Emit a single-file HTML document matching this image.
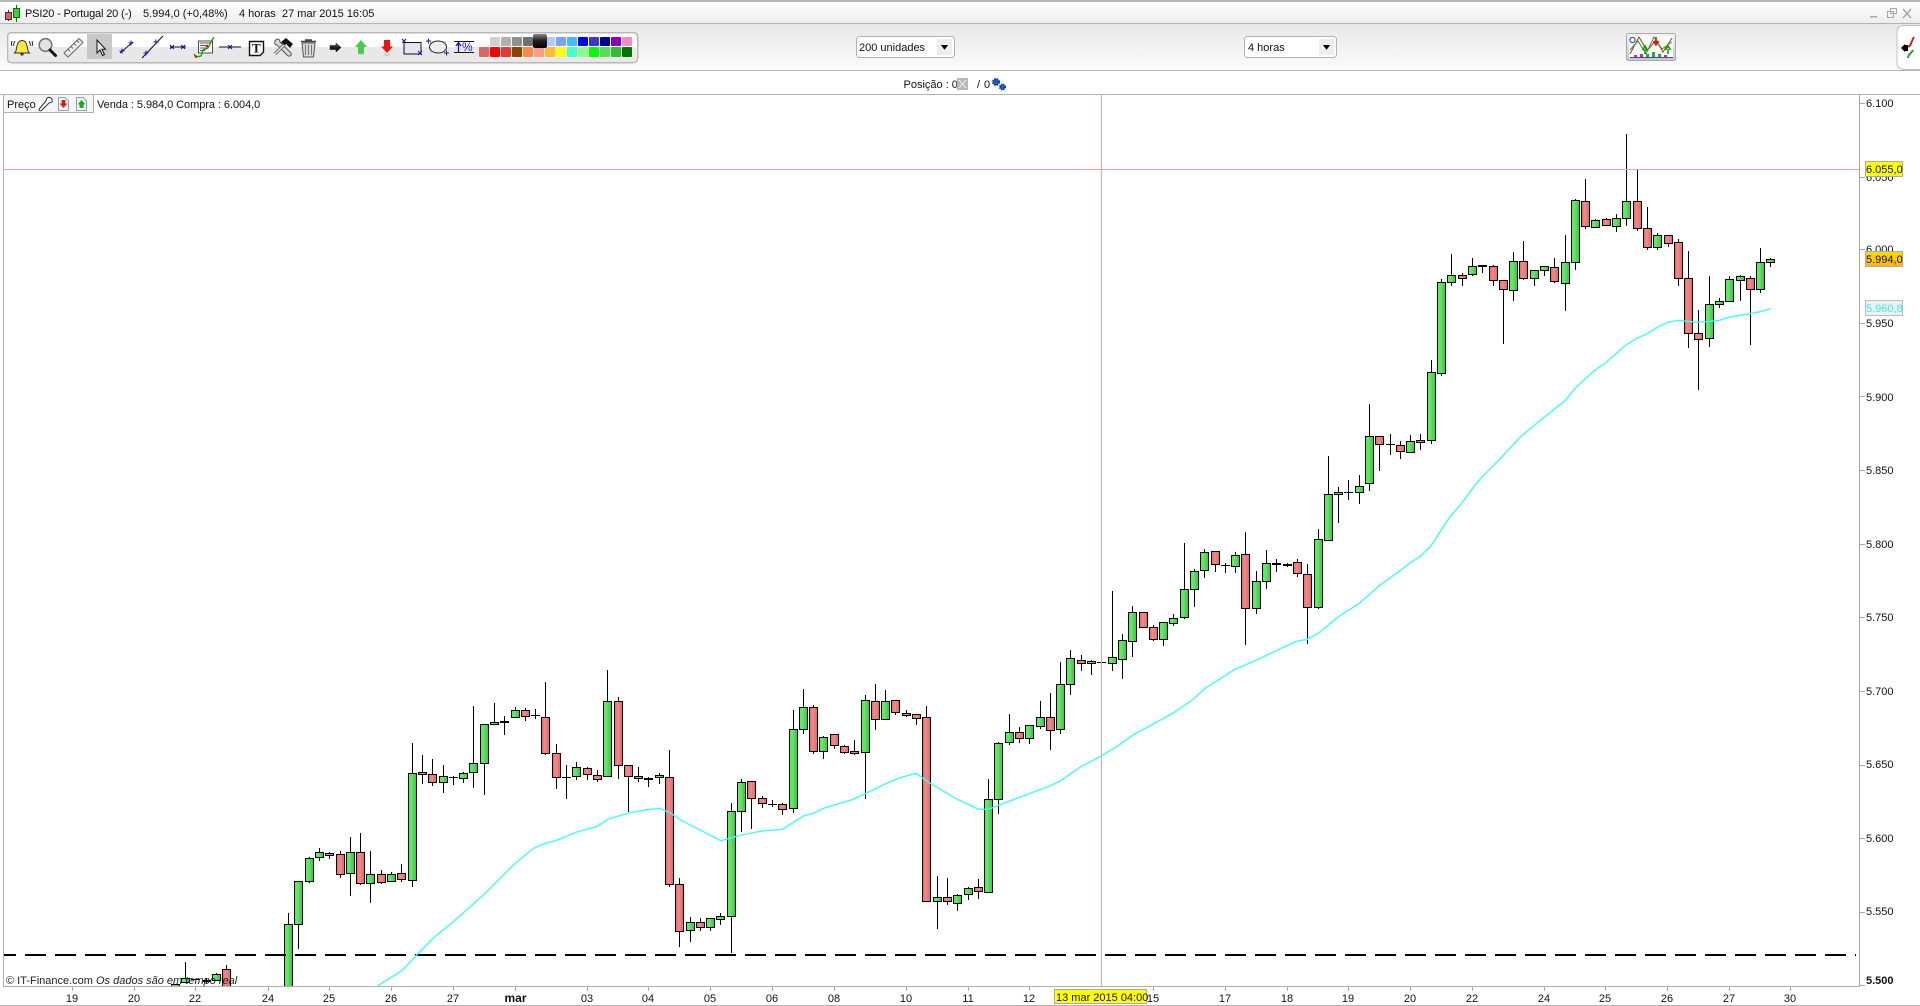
<!DOCTYPE html>
<html><head><meta charset="utf-8"><title>PSI20</title>
<style>
html,body{margin:0;padding:0;background:#fff;width:1920px;height:1006px;overflow:hidden}
svg{display:block;position:absolute;left:0;top:0}
text{font-family:"Liberation Sans",sans-serif;font-size:11px;fill:#111}
.b rect{width:8px;stroke:#000;stroke-width:1}
.sw rect{width:10px;rx:1.5px}
.xl text{text-anchor:middle;font-size:11px}
.yl text{font-size:11px}
.bl{fill:none;stroke:#1010e0;stroke-width:1}
</style></head><body>
<svg width="1920" height="1006" viewBox="0 0 1920 1006" xmlns="http://www.w3.org/2000/svg" shape-rendering="crispEdges">
<defs>
<linearGradient id="tb" x1="0" y1="0" x2="0" y2="1"><stop offset="0" stop-color="#fff"/><stop offset="1" stop-color="#ededed"/></linearGradient>
<linearGradient id="tl" x1="0" y1="0" x2="0" y2="1"><stop offset="0" stop-color="#e8e8e8"/><stop offset="1" stop-color="#fbfbfb"/></linearGradient>
<linearGradient id="g"><stop offset="0" stop-color="#5ee85e"/><stop offset=".35" stop-color="#62ea62"/><stop offset="1" stop-color="#3cc04c"/></linearGradient>
<linearGradient id="r"><stop offset="0" stop-color="#dc6a6a"/><stop offset=".4" stop-color="#f88888"/><stop offset="1" stop-color="#dc6868"/></linearGradient>
<linearGradient id="au" x1="0" y1="0" x2="0" y2="1"><stop offset="0" stop-color="#ffdd00"/><stop offset="1" stop-color="#ffb800"/></linearGradient>
<linearGradient id="blk" x1="0" y1="0" x2="0" y2="1"><stop offset="0" stop-color="#888"/><stop offset=".45" stop-color="#222"/><stop offset="1" stop-color="#000"/></linearGradient>
<linearGradient id="btn" x1="0" y1="0" x2="0" y2="1"><stop offset="0" stop-color="#f4f4f4"/><stop offset="1" stop-color="#c8c8c8"/></linearGradient>
<clipPath id="plot"><rect x="4" y="95" width="1855" height="891"/></clipPath>
</defs>

<!-- window chrome -->
<rect x="0" y="0" width="1920" height="1006" fill="#fff"/>
<rect x="0" y="0" width="1920" height="2" fill="#b8b8b8"/>
<rect x="0" y="2" width="1920" height="21" fill="url(#tb)"/>
<rect x="0" y="23" width="1920" height="1" fill="#b4b4b4"/>
<rect x="0" y="24" width="1920" height="46" fill="url(#tl)"/>
<rect x="0" y="70" width="1920" height="1" fill="#b4b4b4"/>
<rect x="0" y="94" width="1920" height="1" fill="#b4b4b4"/>
<rect x="3" y="94" width="1" height="892" fill="#b0b0b0"/>
<rect x="1859" y="94" width="1" height="892" fill="#a8a8a8"/>
<rect x="3" y="986" width="1857" height="1" fill="#b0b0b0"/>
<rect x="0" y="1005" width="1920" height="1" fill="#b4b4b4"/>

<!-- title bar -->
<g>
<path d="M8.5 10V21" stroke="#333" fill="none"/><rect x="5.5" y="12.5" width="6" height="7" fill="#e06060" stroke="#333"/>
<path d="M16.5 5V22" stroke="#070" fill="none"/><rect x="13.5" y="8.5" width="6" height="9" fill="#44cc44" stroke="#070"/>
</g>
<text x="25" y="17" letter-spacing="-0.15">PSI20 - Portugal 20 (-)</text>
<text x="143" y="17">5.994,0 (+0,48%)</text>
<text x="239" y="17">4 horas</text>
<text x="282" y="17">27 mar 2015 16:05</text>
<g fill="none" stroke="#a8a8a8">
<path d="M1870 16.5H1877" stroke-width="1.5"/>
<rect x="1887.5" y="11.5" width="6" height="6"/><rect x="1890.5" y="8.5" width="6" height="5"/>
<path d="M1903 9L1911 18M1911 9L1903 18" stroke-width="1.5" shape-rendering="auto"/>
</g>

<!-- toolbar box -->
<rect x="7.5" y="32.5" width="630" height="30" rx="4" fill="#fff" stroke="#b8b8b8" stroke-width="1.5"/>
<rect x="9" y="47" width="627.5" height="15" rx="3" fill="#e8e8e8"/>
<rect x="87" y="34" width="25" height="25" fill="#c8c8c8"/>

<g shape-rendering="auto">
<!-- bell -->
<g transform="translate(22,47)">
<path d="M-6 4C-5 -1 -5 -6 0 -6.5C5 -6 5 -1 6 4L7.5 6H-7.5Z" fill="#ffe83c" stroke="#333" stroke-width="1"/>
<circle cx="0" cy="7" r="1.6" fill="#333"/>
<path d="M-7 -6Q-9 -3 -8 -1M-10 -6Q-11 -3 -10 -1M7 -6Q9 -3 8 -1M10 -6Q11 -3 10 -1" fill="none" stroke="#222"/>
</g>
<!-- magnifier -->
<circle cx="45.5" cy="45" r="6.3" fill="#e2e2e2" stroke="#777" stroke-width="1.6"/>
<path d="M50 50L55.5 55.5" stroke="#111" stroke-width="3" stroke-linecap="round"/>
<!-- ruler -->
<path d="M64 53L79 38.5L83 42.5L68 57Z" fill="#eee" stroke="#666"/>
<path d="M68 49.5L70 51.5M71 46.5L73 48.5M74 43.5L76 45.5M77 40.5L79 42.5" stroke="#666"/>
<!-- pointer -->
<path d="M97 40V53L100 50L102.5 55.5L104.5 54.5L102 49.2H105.5Z" fill="#e8e8e8" stroke="#111" stroke-width="1"/>
<!-- line tools -->
<path d="M120 53L133 42M142 58L163 36M170 47H186M219 47H241" stroke="#111" fill="none"/>
<path class="bl" d="M119.5 51H124.5M122 48.5V53.5M128.5 43H133.5M131 40.5V45.5M143.5 53H148.5M146 50.5V55.5M153.5 42H158.5M156 39.5V44.5M170 45L174 49M174 45L170 49M181 45L185 49M185 45L181 49M228 45L232 49M232 45L228 49"/>
<!-- candle grid -->
<rect x="198.5" y="41" width="14" height="12" fill="#fff" stroke="#222" stroke-width=".8"/>
<path d="M200 43H210M200 45.5H208M200 48H207M200 50.5H205" stroke="#222" stroke-width=".8"/>
<path d="M194 54L196 57L201 56L203 50L208 48L211 42L214 37" fill="none" stroke="#0a0" stroke-width="1.3"/>
<circle cx="196" cy="56.5" r="1.3" fill="#e00"/><circle cx="207" cy="46" r="1.3" fill="#e00"/>
<!-- T -->
<path d="M249.5 41.5H263.5V52L260 55.5H249.5Z" fill="#fff" stroke="#111" stroke-width="1.4"/>
<text x="252" y="52.5" style="font-family:'Liberation Serif',serif;font-weight:bold;font-size:13px;fill:#111">T</text>
<!-- tools -->
<path d="M275 41C277 38 280 39 280 42L291 53C292 56 289 57 287 55L277 45C275 45 274 43 275 41Z" fill="#d8d8d8" stroke="#555"/>
<path d="M275 54L285 44" stroke="#666" stroke-width="3.2"/><path d="M275 54L285 44" stroke="#e8e8e8" stroke-width="1.4"/>
<path d="M281 42L286 38L293 44L290 48L286 44L284 45Z" fill="#111"/>
<!-- trash -->
<path d="M302 43H315L313.5 57H303.5Z" fill="#d8d8d8" stroke="#555"/>
<path d="M301 41.5H316M305 40H312" stroke="#444" stroke-width="1.6"/>
<path d="M305.5 45V55M308.5 45V55M311.5 45V55" stroke="#777"/>
<!-- arrows -->
<path d="M330 45.5H336V43L341 47.5L336 52V49.5H330Z" fill="url(#blk)" stroke="#000" stroke-width=".5"/>
<path d="M361 40L367 47H364V54H358V47H355Z" fill="#44cc4c"/><path d="M358 54H364" stroke="#b8b8c8"/>
<path d="M384 40H390V46.5H393L387 53L381 46.5H384Z" fill="#f01010"/><path d="M384 54L387 55.5L390 54" stroke="#c8b8b8" fill="none"/>
<!-- rect / ellipse -->
<rect x="404" y="42.5" width="16" height="11" fill="#e4e4ec" stroke="none"/>
<path d="M404 42.5H421V54H404Z" fill="none" stroke="#111"/>
<path class="bl" d="M402 39L406 43M406 39L402 43M418 51L422 55M422 51L418 55"/>
<rect x="430" y="41" width="16" height="12" fill="#d8d8e0"/>
<ellipse cx="438" cy="47" rx="8.5" ry="6" fill="#eee" stroke="#222"/>
<path class="bl" d="M426 41H431M428.5 38.5V43.5M444 53H449M446.5 50.5V55.5"/>
<!-- percent -->
<path d="M454 41.5H474M454 52.5H474" stroke="#111"/>
<path d="M458.5 52V44M456 46L458.5 42.5L461 46" stroke="#1010e0" fill="none" stroke-width="1.3"/>
<text x="462" y="51" style="font-size:12px;fill:#1010e0">%</text>
</g>

<!-- swatches -->
<g class="sw">
<rect x="490" y="37" height="9" fill="#d0d0d0"/><rect x="501" y="37" height="9" fill="#b0b0b0"/><rect x="512" y="37" height="9" fill="#909090"/><rect x="523" y="37" height="9" fill="#707070"/>
<rect x="545" y="37" height="9" fill="#b8c8ff"/><rect x="556" y="37" height="9" fill="#78a4ff"/><rect x="567" y="37" height="9" fill="#44bbff"/><rect x="578" y="37" height="9" fill="#0000ee"/><rect x="589" y="37" height="9" fill="#3838d0"/><rect x="600" y="37" height="9" fill="#000099"/><rect x="611" y="37" height="9" fill="#8800bb"/><rect x="622" y="37" height="9" fill="#ff88c8"/>
<rect x="479" y="47" height="10" fill="#dd6666"/><rect x="490" y="47" height="10" fill="#ff0000"/><rect x="501" y="47" height="10" fill="#e83838"/><rect x="512" y="47" height="10" fill="#884400"/><rect x="523" y="47" height="10" fill="#ff8844"/><rect x="534" y="47" height="10" fill="#ff9988"/><rect x="545" y="47" height="10" fill="#ffbb33"/><rect x="556" y="47" height="10" fill="#ffff00"/><rect x="567" y="47" height="10" fill="#44ffcc"/><rect x="578" y="47" height="10" fill="#88ff88"/><rect x="589" y="47" height="10" fill="#00ff00"/><rect x="600" y="47" height="10" fill="#55dd55"/><rect x="611" y="47" height="10" fill="#33bb33"/><rect x="622" y="47" height="10" fill="#007700"/>
</g>
<rect x="533" y="34" width="14" height="14" rx="2" fill="url(#blk)"/>

<!-- selects -->
<rect x="856.5" y="36.5" width="98" height="21" rx="3" fill="#fff" stroke="#b4b4b4"/>
<rect x="937" y="39" width="15" height="16" fill="#eee"/>
<path d="M941 45H948L944.5 50Z" fill="#000"/>
<text x="859" y="51">200 unidades</text>
<rect x="1244.5" y="36.5" width="92" height="21" rx="3" fill="#fff" stroke="#b4b4b4"/>
<rect x="1319" y="39" width="15" height="16" fill="#eee"/>
<path d="M1323 45H1330L1326.5 50Z" fill="#000"/>
<text x="1248" y="51">4 horas</text>

<!-- chart icon button -->
<rect x="1626.5" y="33.5" width="49" height="27" rx="2" fill="url(#btn)" stroke="#aaa"/>
<rect x="1629" y="36" width="44" height="22" fill="#fff"/>
<g shape-rendering="auto" fill="none">
<path d="M1630 54L1639 37L1647 51L1656 40L1663 52L1672 38" stroke="#d02020"/>
<path d="M1630 50L1638 41L1646 54L1654 37L1662 49L1672 42" stroke="#20a020"/>
<circle cx="1632.5" cy="40" r="2.6" stroke="#1040d0" fill="#fff"/>
<path d="M1645 54V49M1642.5 50L1645 46L1647.5 50M1668 54V49M1665.5 50L1668 46L1670.5 50" stroke="#0a0" stroke-width="1.6"/>
<path d="M1656 37V43M1653.5 41L1656 45L1658.5 41" stroke="#e01010" stroke-width="1.6"/>
</g>
<path d="M1630 57.5H1673" stroke="#4040c0"/>
<rect x="1634" y="55" width="3" height="2" fill="#d03070"/><rect x="1640" y="54" width="3" height="3" fill="#d03070"/><rect x="1646" y="54" width="3" height="3" fill="#20b020"/><rect x="1652" y="52" width="3" height="5" fill="#20b020"/><rect x="1658" y="54" width="3" height="3" fill="#20b020"/><rect x="1664" y="55" width="3" height="2" fill="#d03070"/>

<!-- right tab -->
<path d="M1920 25.5H1904Q1897 26 1897 32V63Q1897 69 1904 69.5H1920" fill="#fff" stroke="#c0c0c0"/>
<g shape-rendering="auto">
<path d="M1914 37C1911 41 1912 45 1908 47" fill="none" stroke="#e01010" stroke-width="1.8"/>
<path d="M1908 58C1908 54 1912 53 1913 50" fill="none" stroke="#10a010" stroke-width="1.8"/>
<path d="M1905 44V52L1901 48Z" fill="#000"/><rect x="1904" y="45" width="4" height="6" fill="#000"/>
</g>

<!-- position row -->
<text x="903.5" y="88">Posição : 0</text>
<rect x="957" y="78" width="11" height="12" fill="#b8b8b8"/>
<path d="M959 80L966 88M966 80L959 88" stroke="#eee" fill="none"/>
<text x="977" y="88">/</text>
<text x="984" y="88">0</text>
<g shape-rendering="auto">
<circle cx="996" cy="82" r="3" fill="#1a5fc8" stroke="#0c3a90" stroke-dasharray="1.6 .8" stroke-width="2"/>
<circle cx="1002.5" cy="87" r="2.6" fill="#1a5fc8" stroke="#0c3a90" stroke-dasharray="1.3 .8" stroke-width="1.8"/>
</g>

<!-- legend -->
<rect x="4" y="95" width="89" height="17" fill="#f6f6f6"/>
<path d="M4 112.5H93.5V95" fill="none" stroke="#b0b0b0"/>
<text x="7" y="108">Preço</text>
<g shape-rendering="auto">
<path d="M47 98C50 96 53 99 52 102L49 103L42 110C40 112 38 110 40 108L46 101Z" fill="#fff" stroke="#333"/>
<path d="M58.5 97.5H65L68.5 101V110.5H58.5Z" fill="#fff" stroke="#8aa0c8"/>
<path d="M61.5 100H65.5V103.5H67.5L63.5 108L59.5 103.5H61.5Z" fill="#e81818"/>
<path d="M76.5 97.5H83L86.5 101V110.5H76.5Z" fill="#fff" stroke="#8aa0c8"/>
<path d="M81.5 100L85.5 104.5H83.5V108H79.5V104.5H77.5Z" fill="#10b010"/>
</g>
<text x="97" y="108" letter-spacing="-0.06">Venda : 5.984,0 Compra : 6.004,0</text>

<!-- chart -->
<g clip-path="url(#plot)">
<path fill="none" stroke="#000" d="M185.5 962V982M206.5 978V983M216.5 973V980M226.5 965V986M288.5 913V986M298.5 924V949M309.5 857V883M319.5 848V861M329.5 852V859M340.5 851V878M350.5 837V896M360.5 833V885M370.5 851V903M381.5 870V884M391.5 872V881M401.5 864V882M412.5 743V887M422.5 755V784M432.5 759V786M443.5 765V793M453.5 776V785M463.5 772V783M473.5 706V788M484.5 724V795M494.5 703V725M504.5 716V735M515.5 707V717M525.5 708V721M535.5 709V719M545.5 682V755M556.5 744V789M566.5 765V799M576.5 762V780M587.5 767V780M597.5 770V782M607.5 670V776M618.5 697V779M628.5 765V812M638.5 767V782M648.5 777V787M659.5 773V784M669.5 750V887M679.5 878V947M690.5 917V942M700.5 918V931M710.5 918V931M720.5 913V925M731.5 803V953M741.5 779V832M751.5 781V829M762.5 796V808M772.5 800V807M782.5 803V815M793.5 710V813M803.5 689V734M813.5 705V754M823.5 736V759M834.5 734V749M844.5 745V754M854.5 740V755M865.5 695V799M875.5 684V730M885.5 690V719M895.5 700V715M906.5 710V717M916.5 714V725M926.5 706V901M937.5 876V929M947.5 878V905M957.5 894V911M968.5 887V900M978.5 879V899M988.5 779V892M998.5 742V814M1009.5 714V745M1019.5 727V743M1029.5 725V744M1040.5 701V729M1050.5 693V750M1060.5 662V734M1070.5 650V695M1081.5 655V671M1091.5 660V675M1101.5 657V668M1112.5 591V671M1122.5 634V679M1132.5 606V657M1143.5 612V627M1153.5 625V641M1163.5 622V646M1173.5 614V626M1184.5 543V619M1194.5 569V607M1204.5 549V578M1215.5 551V572M1225.5 563V573M1235.5 552V573M1245.5 532V645M1256.5 571V614M1266.5 550V589M1276.5 559V572M1287.5 563V567M1297.5 559V577M1307.5 564V644M1318.5 529V609M1328.5 456V541M1338.5 487V523M1348.5 480V500M1359.5 475V504M1369.5 404V491M1379.5 436V471M1390.5 434V455M1400.5 441V459M1410.5 435V452M1420.5 434V450M1431.5 360V444M1441.5 279V376M1451.5 254V286M1462.5 273V286M1472.5 258V276M1482.5 265V273M1493.5 265V286M1503.5 280V344M1513.5 252V301M1523.5 241V280M1534.5 270V286M1544.5 266V276M1554.5 258V283M1565.5 235V311M1575.5 199V270M1585.5 179V229M1595.5 219V227M1606.5 218V225M1616.5 214V232M1626.5 134V226M1637.5 170V231M1647.5 207V250M1657.5 233V250M1668.5 235V247M1678.5 239V286M1688.5 251V348M1698.5 310V390M1709.5 276V347M1719.5 298V308M1729.5 276V301M1740.5 275V301M1750.5 276V345M1760.5 248V293M1770.5 258V267"/>
<path fill="none" stroke="#000" d="M191 979.5H200M449 777.5H458M562 777.5H571M531 715.5H540M768 804.5H777M1097 662.5H1106M1221 565.5H1230M1344 492.5H1353M1386 444.5H1395"/>
<path fill="none" stroke="#000" stroke-width="2" d="M500 722H509M644 779H653M1272 564H1281M1283 565H1292M1478 266H1487"/>
<g class="b" fill="url(#g)">
<rect x="171.5" y="984.5" height="6"/><rect x="181.5" y="978.5" height="4"/><rect x="212.5" y="974.5" height="6"/><rect x="284.5" y="924.5" height="66"/><rect x="294.5" y="881.5" height="43"/><rect x="305.5" y="858.5" height="23"/><rect x="315.5" y="852.5" height="5"/><rect x="346.5" y="852.5" height="21"/><rect x="366.5" y="874.5" height="9"/><rect x="387.5" y="874.5" height="7"/><rect x="408.5" y="773.5" height="107"/><rect x="439.5" y="776.5" height="6"/><rect x="459.5" y="773.5" height="5"/><rect x="469.5" y="763.5" height="9"/><rect x="480.5" y="724.5" height="39"/><rect x="490.5" y="722.5" height="2"/><rect x="511.5" y="710.5" height="7"/><rect x="572.5" y="767.5" height="9"/><rect x="603.5" y="701.5" height="75"/><rect x="655.5" y="775.5" height="2"/><rect x="686.5" y="922.5" height="8"/><rect x="706.5" y="918.5" height="9"/><rect x="716.5" y="916.5" height="3"/><rect x="727.5" y="811.5" height="105"/><rect x="737.5" y="782.5" height="29"/><rect x="789.5" y="729.5" height="79"/><rect x="799.5" y="707.5" height="22"/><rect x="819.5" y="737.5" height="14"/><rect x="861.5" y="700.5" height="52"/><rect x="881.5" y="701.5" height="18"/><rect x="933.5" y="897.5" height="4"/><rect x="953.5" y="895.5" height="8"/><rect x="964.5" y="888.5" height="6"/><rect x="984.5" y="799.5" height="93"/><rect x="994.5" y="743.5" height="56"/><rect x="1005.5" y="732.5" height="10"/><rect x="1025.5" y="725.5" height="13"/><rect x="1036.5" y="717.5" height="9"/><rect x="1056.5" y="684.5" height="45"/><rect x="1066.5" y="658.5" height="26"/><rect x="1087.5" y="661.5" height="2"/><rect x="1108.5" y="657.5" height="6"/><rect x="1118.5" y="640.5" height="19"/><rect x="1128.5" y="612.5" height="29"/><rect x="1159.5" y="622.5" height="17"/><rect x="1169.5" y="618.5" height="5"/><rect x="1180.5" y="589.5" height="28"/><rect x="1190.5" y="571.5" height="18"/><rect x="1200.5" y="552.5" height="18"/><rect x="1231.5" y="555.5" height="11"/><rect x="1252.5" y="581.5" height="27"/><rect x="1262.5" y="563.5" height="18"/><rect x="1314.5" y="539.5" height="68"/><rect x="1324.5" y="494.5" height="46"/><rect x="1334.5" y="492.5" height="2"/><rect x="1355.5" y="486.5" height="6"/><rect x="1365.5" y="436.5" height="47"/><rect x="1406.5" y="441.5" height="11"/><rect x="1427.5" y="372.5" height="68"/><rect x="1437.5" y="282.5" height="91"/><rect x="1447.5" y="275.5" height="7"/><rect x="1468.5" y="266.5" height="8"/><rect x="1509.5" y="261.5" height="29"/><rect x="1530.5" y="270.5" height="8"/><rect x="1540.5" y="266.5" height="4"/><rect x="1561.5" y="262.5" height="21"/><rect x="1571.5" y="200.5" height="62"/><rect x="1591.5" y="220.5" height="7"/><rect x="1612.5" y="218.5" height="8"/><rect x="1622.5" y="201.5" height="17"/><rect x="1653.5" y="235.5" height="12"/><rect x="1705.5" y="304.5" height="34"/><rect x="1715.5" y="301.5" height="3"/><rect x="1725.5" y="279.5" height="22"/><rect x="1736.5" y="276.5" height="4"/><rect x="1756.5" y="262.5" height="27"/><rect x="1766.5" y="259.5" height="3"/>
</g>
<g class="b" fill="url(#r)">
<rect x="202.5" y="980.5" height="1"/><rect x="222.5" y="969.5" height="21"/><rect x="325.5" y="853.5" height="2"/><rect x="336.5" y="854.5" height="20"/><rect x="356.5" y="852.5" height="31"/><rect x="377.5" y="874.5" height="8"/><rect x="397.5" y="873.5" height="6"/><rect x="418.5" y="772.5" height="2"/><rect x="428.5" y="774.5" height="8"/><rect x="521.5" y="710.5" height="6"/><rect x="541.5" y="717.5" height="36"/><rect x="552.5" y="753.5" height="24"/><rect x="583.5" y="768.5" height="6"/><rect x="593.5" y="775.5" height="4"/><rect x="614.5" y="701.5" height="64"/><rect x="624.5" y="765.5" height="11"/><rect x="634.5" y="776.5" height="2"/><rect x="665.5" y="777.5" height="107"/><rect x="675.5" y="884.5" height="47"/><rect x="696.5" y="922.5" height="5"/><rect x="747.5" y="781.5" height="17"/><rect x="758.5" y="798.5" height="5"/><rect x="778.5" y="804.5" height="5"/><rect x="809.5" y="707.5" height="44"/><rect x="830.5" y="734.5" height="11"/><rect x="840.5" y="746.5" height="6"/><rect x="850.5" y="751.5" height="2"/><rect x="871.5" y="701.5" height="18"/><rect x="891.5" y="700.5" height="12"/><rect x="902.5" y="713.5" height="2"/><rect x="912.5" y="714.5" height="4"/><rect x="922.5" y="717.5" height="184"/><rect x="943.5" y="897.5" height="4"/><rect x="974.5" y="887.5" height="4"/><rect x="1015.5" y="732.5" height="6"/><rect x="1046.5" y="717.5" height="13"/><rect x="1077.5" y="660.5" height="3"/><rect x="1139.5" y="612.5" height="15"/><rect x="1149.5" y="627.5" height="12"/><rect x="1211.5" y="551.5" height="13"/><rect x="1241.5" y="554.5" height="54"/><rect x="1293.5" y="562.5" height="11"/><rect x="1303.5" y="574.5" height="33"/><rect x="1375.5" y="436.5" height="8"/><rect x="1396.5" y="445.5" height="6"/><rect x="1416.5" y="440.5" height="2"/><rect x="1458.5" y="275.5" height="3"/><rect x="1489.5" y="266.5" height="14"/><rect x="1499.5" y="280.5" height="9"/><rect x="1519.5" y="261.5" height="17"/><rect x="1550.5" y="267.5" height="14"/><rect x="1581.5" y="201.5" height="25"/><rect x="1602.5" y="219.5" height="6"/><rect x="1633.5" y="201.5" height="27"/><rect x="1643.5" y="228.5" height="19"/><rect x="1664.5" y="235.5" height="8"/><rect x="1674.5" y="242.5" height="36"/><rect x="1684.5" y="278.5" height="55"/><rect x="1694.5" y="333.5" height="6"/><rect x="1746.5" y="278.5" height="11"/>
</g>
<path d="M4 955H1856" stroke="#000" stroke-width="2.4" stroke-dasharray="21 9" stroke-dashoffset="9" fill="none"/>
<polyline shape-rendering="auto" fill="none" stroke="#3cffff" stroke-width="1.4" points="377.5,986 386.7,980 401.7,971 416.7,955 433.3,938 453.3,921.7 483.3,895 513.3,865 533.3,848.3 545,843.3 556.7,840.3 576.7,832 596.7,826.7 608.3,819 628.3,813.3 646.7,809.7 660,808.3 670,812.7 681.7,820.7 700,830 720.7,840.7 741.7,835 761.7,831 782.3,829.3 803.3,816 813.3,813.3 823.3,808.3 853.3,799.3 885,784 900,777.7 916,773.3 930,783.3 956.7,799 978.3,809.3 988.3,809.3 1030,793.3 1050,786 1060,781 1080,767.3 1101,756 1117.6,746 1133,735 1172.6,713.3 1192.3,700 1205,688.3 1235,669.3 1256.7,660 1283.3,647.3 1296.7,641.3 1307.3,639.3 1318.3,633.3 1338.3,616.7 1359.3,603.3 1380,585 1400,570.7 1411.7,561.7 1420.7,556 1431,545.7 1450,516.7 1461.7,503.3 1473.3,487.3 1481.7,477.3 1500,459 1520,437.3 1540.7,420 1565,400.7 1575,388.3 1595,370 1605,363.3 1625,345.7 1636.7,338.3 1646.7,334 1658.3,326.7 1668.3,322 1678.3,320.3 1696.7,322.3 1718.3,320.7 1728.3,317.3 1748.3,314 1760,311.7 1770.7,308.7"/>
<rect x="1101" y="95" width="1" height="891" fill="#f0a0a0"/>
<rect x="4" y="169" width="1855" height="1" fill="#f0a0a0"/>
</g>
<text x="6" y="984" style="fill:#222">© IT-Finance.com</text>
<text x="96" y="984" style="font-style:italic;fill:#222">Os dados são em tempo real</text>

<!-- y axis -->
<path stroke="#a8a8a8" fill="none" d="M1860 103.5H1865M1860 177.5H1865M1860 249.5H1865M1860 323.5H1865M1860 396.5H1865M1860 470.5H1865M1860 544.5H1865M1860 617.5H1865M1860 691.5H1865M1860 765.5H1865M1860 838.5H1865M1860 912.5H1865M1860 985.5H1865"/>
<g class="yl">
<text x="1866" y="107">6.100</text><text x="1866" y="181">6.050</text><text x="1866" y="253">6.000</text><text x="1866" y="327">5.950</text><text x="1866" y="401">5.900</text><text x="1866" y="474">5.850</text><text x="1866" y="548">5.800</text><text x="1866" y="621">5.750</text><text x="1866" y="695">5.700</text><text x="1866" y="768">5.650</text><text x="1866" y="842">5.600</text><text x="1866" y="915">5.550</text><text x="1866" y="984" style="font-weight:bold">5.500</text>
</g>
<rect x="1865.5" y="161.5" width="37" height="15" fill="#ffff00" stroke="#aaa"/>
<text x="1866" y="173">6.055,0</text>
<rect x="1865.5" y="251.5" width="37" height="15" fill="url(#au)" stroke="#aaa"/>
<text x="1866" y="263">5.994,0</text>
<rect x="1865.5" y="300.5" width="37" height="15" fill="#f0f0f0" stroke="#bbb"/>
<text x="1866" y="312" style="fill:#30f0f0">5.960,8</text>

<!-- x axis -->
<path stroke="#a8a8a8" fill="none" d="M72.5 987V991M134.5 987V991M195.5 987V991M268.5 987V991M329.5 987V991M391.5 987V991M453.5 987V991M515.5 987V991M587.5 987V991M648.5 987V991M710.5 987V991M772.5 987V991M834.5 987V991M906.5 987V991M968.5 987V991M1029.5 987V991M1153.5 987V991M1225.5 987V991M1287.5 987V991M1348.5 987V991M1410.5 987V991M1472.5 987V991M1544.5 987V991M1605.5 987V991M1667.5 987V991M1729.5 987V991M1790.5 987V991"/>
<g class="xl">
<text x="72" y="1002">19</text><text x="134" y="1002">20</text><text x="195" y="1002">22</text><text x="268" y="1002">24</text><text x="329" y="1002">25</text><text x="391" y="1002">26</text><text x="453" y="1002">27</text><text x="515.5" y="1002" style="font-weight:bold;font-size:12px">mar</text><text x="587" y="1002">03</text><text x="648" y="1002">04</text><text x="710" y="1002">05</text><text x="772" y="1002">06</text><text x="834" y="1002">08</text><text x="906" y="1002">10</text><text x="968" y="1002">11</text><text x="1029" y="1002">12</text><text x="1153" y="1002">15</text><text x="1225" y="1002">17</text><text x="1287" y="1002">18</text><text x="1348" y="1002">19</text><text x="1410" y="1002">20</text><text x="1472" y="1002">22</text><text x="1544" y="1002">24</text><text x="1605" y="1002">25</text><text x="1667" y="1002">26</text><text x="1729" y="1002">27</text><text x="1790" y="1002">30</text>
</g>
<rect x="1054.5" y="989.5" width="92" height="14" fill="#ffff00" stroke="#aaa"/>
<text x="1056" y="1001">13 mar 2015 04:00</text>
</svg>
</body></html>
